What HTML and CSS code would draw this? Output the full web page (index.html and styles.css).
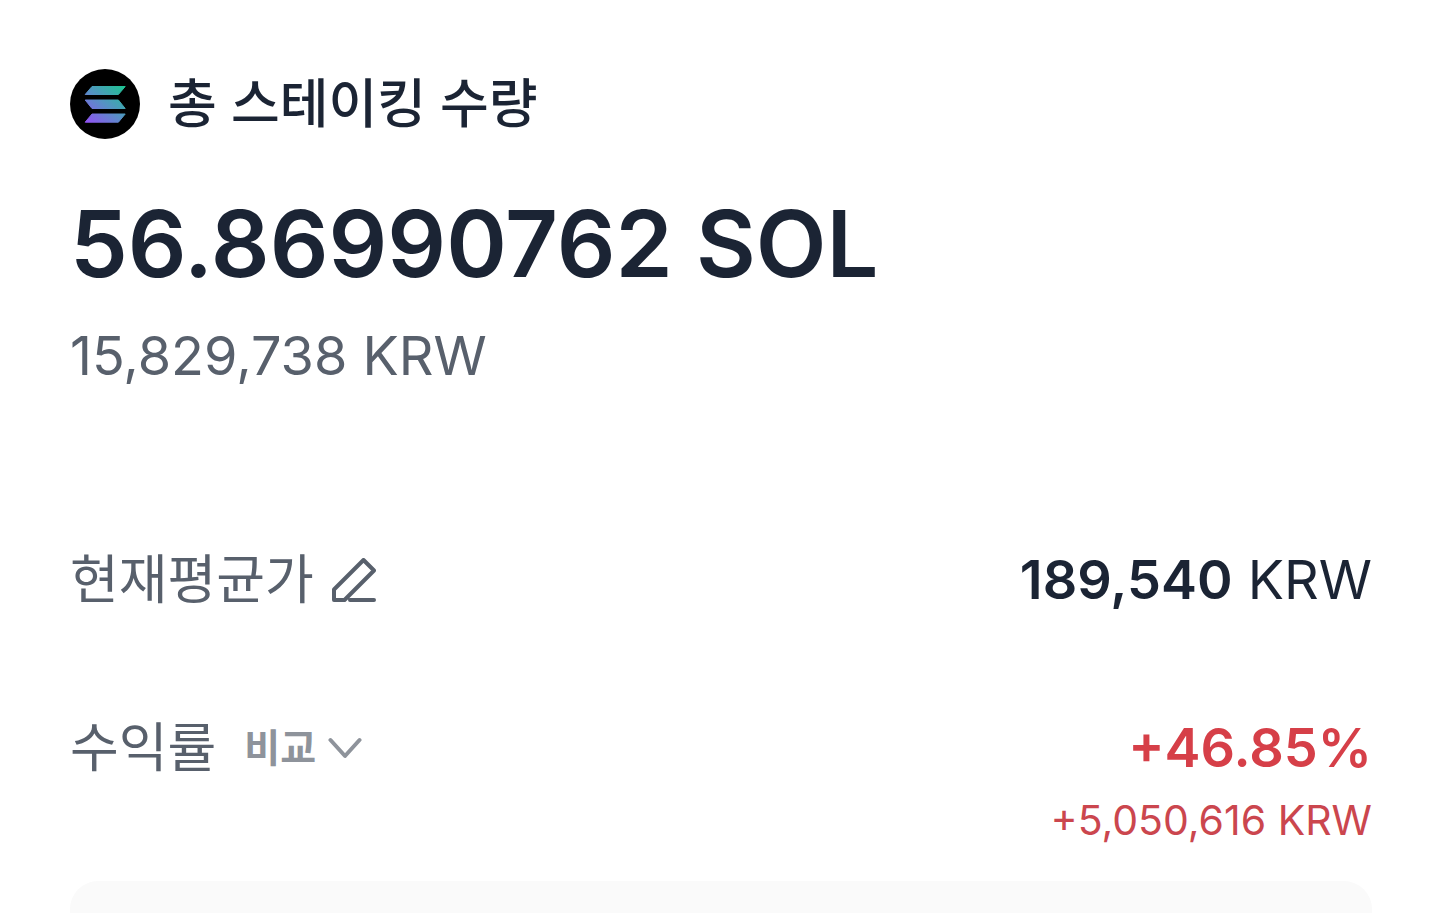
FILE: index.html
```html
<!DOCTYPE html>
<html lang="ko">
<head>
    <meta charset="UTF-8">
    <meta name="viewport" content="width=device-width, initial-scale=1">
    <title>총 스테이킹 수량</title>
    <link rel="stylesheet" href="styles.css">
</head>
<body>
    <main class="staking">
        <header class="staking-header">
            <svg class="coin" viewBox="0 0 70 70" aria-hidden="true">
                <defs>
                    <linearGradient id="sol" gradientUnits="userSpaceOnUse" x1="18" y1="56" x2="52" y2="14">
                        <stop offset="0" stop-color="#9350f5"/>
                        <stop offset="0.5" stop-color="#5592c4"/>
                        <stop offset="1" stop-color="#1cc690"/>
                    </linearGradient>
                </defs>
                <circle cx="35" cy="35" r="35" fill="#000"/>
                <g fill="url(#sol)" stroke="url(#sol)" stroke-width="1" stroke-linejoin="round">
                    <path d="M22 17.5H55.2L48.4 25.5H15.2Z"/>
                    <path d="M15.2 31H48.4L55.2 39.5H22Z"/>
                    <path d="M22 45H55.2L48.4 53.2H15.2Z"/>
                </g>
            </svg>
            <h1 class="title">총 스테이킹 수량</h1>
        </header>

        <p class="amount">56.86990762 SOL</p>
        <p class="amount-krw">15,829,738 KRW</p>

        <dl class="stats">
            <div class="row">
                <dt class="label">
                    현재평균가
                    <button class="icon-button" type="button" aria-label="수정">
                        <svg class="pencil" viewBox="0 0 44 44" aria-hidden="true">
                            <path d="M2 42V31.500L31.500 2L42 12.500L12.500 42ZM18 42H42"/>
                        </svg>
                    </button>
                </dt>
                <dd class="value"><strong>189,540</strong> KRW</dd>
            </div>
            <div class="row">
                <dt class="label">
                    수익률
                    <button class="compare" type="button">
                        비교
                        <svg class="chevron" viewBox="0 0 34 22" aria-hidden="true">
                            <path d="M2.500 3L17 19L31.500 3"/>
                        </svg>
                    </button>
                </dt>
                <dd class="value profit">
                    <strong>+46.85%</strong>
                    <span class="profit-krw">+5,050,616 KRW</span>
                </dd>
            </div>
        </dl>

        <section class="panel"></section>
    </main>
</body>
</html>
```
FILE: styles.css
```css
* {
    box-sizing: border-box;
}
body {
    margin: 0;
    background-color: #fff;
    color: #1b2434;
    font-family: Inter, "Noto Sans CJK KR", sans-serif;
}
h1, p, dl, dd {
    margin: 0;
}
button {
    padding: 0;
    border: 0;
    background: none;
    font-family: inherit;
    cursor: pointer;
}
svg {
    display: block;
    fill: none;
}
.staking {
    display: flex;
    flex-direction: column;
    min-height: 100vh;
    padding: 69px 67px 0 70px;
}
.staking-header {
    display: flex;
    align-items: center;
    gap: 28px;
    height: 70px;
}
.coin {
    width: 70px;
    height: 70px;
}
.title {
    font-size: 53px;
    font-weight: 500;
    line-height: 72px;
}
.amount {
    margin-top: 49px;
    font-size: 92px;
    font-weight: 600;
    line-height: 112px;
}
.amount-krw {
    margin-top: 24px;
    color: #58606c;
    font-size: 54px;
    line-height: 64px;
}
.stats {
    display: flex;
    flex-direction: column;
    gap: 96px;
    margin-top: 156px;
}
.row {
    display: flex;
    justify-content: space-between;
    align-items: flex-start;
}
.label {
    display: flex;
    align-items: center;
    gap: 18px;
    color: #58606c;
    font-size: 53px;
    line-height: 72px;
}
.value {
    font-size: 54px;
    line-height: 72px;
    text-align: right;
}
.value strong {
    font-weight: 600;
}
.pencil {
    width: 44px;
    height: 44px;
    stroke: #58606c;
    stroke-width: 4;
    stroke-linejoin: round;
    stroke-linecap: round;
}
.compare {
    display: flex;
    align-items: center;
    gap: 12px;
    margin-left: 10px;
    color: #8e939b;
    font-size: 39px;
    font-weight: 700;
    line-height: 56px;
}
.chevron {
    width: 34px;
    height: 22px;
    stroke: #8e939b;
    stroke-width: 4;
    stroke-linecap: round;
    stroke-linejoin: round;
}
.profit {
    display: flex;
    flex-direction: column;
    gap: 8px;
    color: #d63f48;
}
.profit-krw {
    color: #cb464e;
    font-size: 41px;
    line-height: 56px;
}
.panel {
    flex: 1;
    margin-top: 33px;
    border-radius: 28px 28px 0 0;
    background-color: #fafafa;
}
```
